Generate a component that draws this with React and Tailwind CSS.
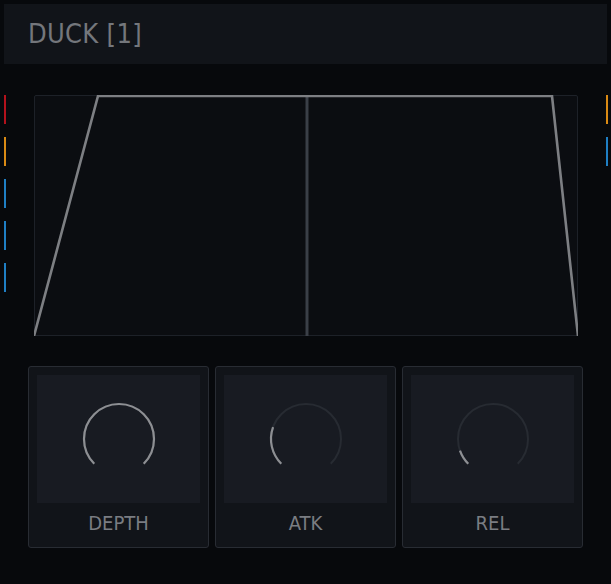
import React from 'react'

const font = { fontFamily: '"DejaVu Sans Condensed", "DejaVu Sans", sans-serif' }

function arcPath(cx, cy, r, from, to) {
  const rad = (d) => (d * Math.PI) / 180
  const x1 = cx + r * Math.sin(rad(from))
  const y1 = cy - r * Math.cos(rad(from))
  const x2 = cx + r * Math.sin(rad(to))
  const y2 = cy - r * Math.cos(rad(to))
  const large = to - from > 180 ? 1 : 0
  return `M ${x1} ${y1} A ${r} ${r} 0 ${large} 1 ${x2} ${y2}`
}

function Knob({ label, value }) {
  const end = -135 + 270 * value
  return (
    <div className="flex-1 h-[182px] border border-[#282c33] rounded-[3px] bg-[#111419] p-2 flex flex-col">
      <div className="h-[128px] bg-[#181b22] flex items-center justify-center">
        <svg width="80" height="80" viewBox="0 0 80 80">
          <path d={arcPath(40, 40, 35, -135, 135)} fill="none" stroke="#272b32" strokeWidth="2" />
          <path d={arcPath(40, 40, 35, -135, end)} fill="none" stroke="#8d8f93" strokeWidth="2.2" />
        </svg>
      </div>
      <div className="flex-1 flex items-center justify-center text-[20px] text-[#7a7d82] pt-[3px]" style={font}>
        {label}
      </div>
    </div>
  )
}

const leftMeters = ['#b3121c', '#d98a14', '#1f7fc4', '#1f7fc4', '#1f7fc4']
const rightMeters = ['#d98a14', '#1f7fc4']

export default function App() {
  return (
    <div className="w-[611px] h-[584px] bg-[#07090c] p-1 overflow-hidden">
      <div className="h-[60px] bg-[#111419] pl-6 flex items-center">
        <span className="text-[27px] text-[#74777c] tracking-[0.3px]" style={font}>
          DUCK [1]
        </span>
      </div>

      <div className="mt-[31px] flex justify-between">
        <div className="w-[2px] flex flex-col gap-[13px]">
          {leftMeters.map((c, i) => (
            <div key={i} className="w-[2px] h-[29px]" style={{ backgroundColor: c }} />
          ))}
        </div>
        <div className="w-[544px] h-[241px] border border-[#1d2128] bg-[#0b0d11] rounded-[2px] relative">
          <svg className="absolute -left-px -top-px" width="544" height="241" viewBox="0 0 544 241">
            <line x1="273" y1="0" x2="273" y2="241" stroke="#3a3f47" strokeWidth="3" />
            <polyline
              points="0,241 64,1 518,1 544,241"
              fill="none"
              stroke="#7d7f83"
              strokeWidth="2.6"
            />
          </svg>
        </div>
        <div className="w-[2px] flex flex-col gap-[13px] mr-[-1px]">
          {rightMeters.map((c, i) => (
            <div key={i} className="w-[2px] h-[29px]" style={{ backgroundColor: c }} />
          ))}
        </div>
      </div>

      <div className="mt-[30px] ml-6 w-[555px] flex gap-[6px]">
        <Knob label="DEPTH" value={1} />
        <Knob label="ATK" value={0.24} />
        <Knob label="REL" value={0.095} />
      </div>
    </div>
  )
}
